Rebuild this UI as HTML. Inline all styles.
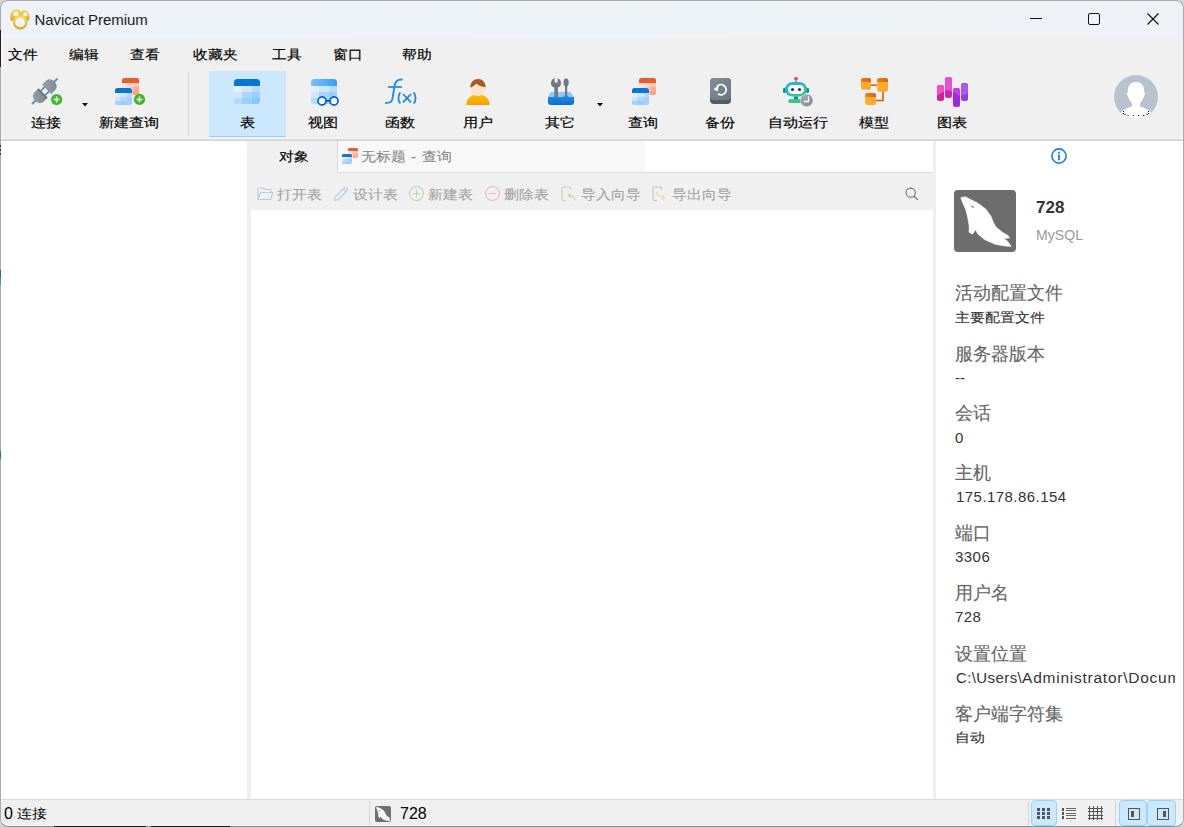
<!DOCTYPE html>
<html><head><meta charset="utf-8">
<style>
*{margin:0;padding:0;box-sizing:border-box}
html,body{width:1184px;height:827px;overflow:hidden;background:#d4d4d4;font-family:"Liberation Sans",sans-serif;color:#000}
.a{position:absolute}
svg{position:absolute;overflow:visible}
#win{position:absolute;left:0;top:0;width:1184px;height:827px;border-radius:8px;overflow:hidden;background:#f0f0f0}
#frame{position:absolute;left:0;top:0;width:1184px;height:827px;border:1px solid #aaa;border-bottom-color:#8f8f8f;border-radius:8px;pointer-events:none}
.t{position:absolute;white-space:nowrap;line-height:1}
.menu,.tb{-webkit-text-stroke:.2px #000}
.lbl{-webkit-text-stroke:.15px #666}
.sy,.otb{-webkit-text-stroke-width:.15px}
.menu{font-size:15px;top:47px;transform:scaleY(.88);transform-origin:50% 50%}
.tb{font-size:15px;top:115px;transform:scaleY(.86);transform-origin:50% 50%}
.gray{color:#9a9a9a}
.lbl{position:absolute;left:955px;font-size:18px;color:#666;white-space:nowrap;line-height:1}
.val{position:absolute;left:955px;font-size:15px;color:#333;white-space:nowrap;line-height:1}
.otb{font-size:15px;top:187px;color:#a4a4a4;transform:scaleY(.88);transform-origin:50% 50%}
.sy{transform:scaleY(.87);transform-origin:50% 50%}
</style></head><body>
<div id="win">
  <!-- title bar -->
  <div class="a" style="left:0;top:0;width:1184px;height:38px;background:linear-gradient(90deg,#eef2fa 0%,#eef2f9 25%,#eef3f7 50%,#eef2f5 80%,#eef2f6 100%)"></div>
  <svg style="left:0;top:0" width="40" height="38" viewBox="0 0 40 38">
    <defs><linearGradient id="gold" x1="0" y1="0" x2="0" y2="1"><stop offset="0" stop-color="#f6dc5c"/><stop offset="1" stop-color="#e3a51a"/></linearGradient></defs>
    <path d="M10.3 20.5 C10 15 11.5 10.5 15.5 9.3 C18.5 8.5 21 10 21.3 12.5 C22 10 24 9.8 25.5 10.3 C28.5 11.3 29.8 15.5 29.4 20.2 L27 21 C25 17 23 16 20.2 16 C17 16 14.5 17.5 13.2 21Z" fill="url(#gold)"/>
    <ellipse cx="15.9" cy="14.1" rx="2.7" ry="2.5" fill="#eef2fa"/>
    <ellipse cx="25.3" cy="14.4" rx="2.1" ry="2.2" fill="#eef2fa"/>
    <circle cx="20.2" cy="22.4" r="6.1" fill="#eef2fa" stroke="url(#gold)" stroke-width="2.3"/>
  </svg>
  <div class="t" style="left:34.5px;top:12px;font-size:15px;color:#1a1a1a;letter-spacing:-.07px">Navicat Premium</div>
  <!-- window controls -->
  <div class="a" style="left:1030px;top:18px;width:12px;height:1px;background:#111"></div>
  <div class="a" style="left:1088px;top:13px;width:12px;height:12px;border:1.3px solid #111;border-radius:2px"></div>
  <svg style="left:1147px;top:13px" width="12" height="12" viewBox="0 0 12 12"><path d="M0.5 0.5L11.5 11.5M11.5 0.5L0.5 11.5" stroke="#111" stroke-width="1.2"/></svg>

  <!-- menu -->
  <div class="t menu" style="left:8px">文件</div>
  <div class="t menu" style="left:69px">编辑</div>
  <div class="t menu" style="left:130px">查看</div>
  <div class="t menu" style="left:193px">收藏夹</div>
  <div class="t menu" style="left:272px">工具</div>
  <div class="t menu" style="left:333px">窗口</div>
  <div class="t menu" style="left:402px">帮助</div>

  <!-- toolbar -->
  <div class="a" style="left:188px;top:72px;width:1px;height:64px;background:#d4d4d4"></div>
  <div class="a" style="left:209px;top:71px;width:77px;height:66px;background:#cce8ff;border-bottom:1px solid #99d1ff"></div>

  <!-- plug icon -->
  <svg style="left:31px;top:78px" width="32" height="28" viewBox="0 0 32 28">
    <defs><linearGradient id="plg" x1="0" y1="0" x2="1" y2="1"><stop offset="0" stop-color="#9ba4ac"/><stop offset="1" stop-color="#7c868f"/></linearGradient></defs>
    <g transform="translate(13.8 13.2) rotate(-45)">
      <rect x="-18" y="-1" width="6" height="2" fill="#5a8fba"/>
      <path d="M-3 -6.5 V6.5 H-8 C-11.5 6.5 -13.5 4 -13.5 0 C-13.5 -4 -11.5 -6.5 -8 -6.5Z" fill="url(#plg)"/>
      <rect x="-4.2" y="-6.5" width="1.8" height="13" fill="#6a737b"/>
      <rect x="-2.5" y="-4" width="5.5" height="1.8" fill="#5a8fba"/>
      <rect x="-2.5" y="2.2" width="5.5" height="1.8" fill="#5a8fba"/>
      <path d="M2.5 -6.5 V6.5 H8 C11.5 6.5 13.5 4 13.5 0 C13.5 -4 11.5 -6.5 8 -6.5Z" fill="url(#plg)"/>
      <rect x="12.5" y="-1" width="5.5" height="2" fill="#5a8fba"/>
    </g>
    <circle cx="25.6" cy="21.5" r="5.6" fill="#41b82a"/>
    <path d="M25.6 18.6V24.4M22.7 21.5H28.5" stroke="#fff" stroke-width="1.5"/>
  </svg>
  <svg style="left:82px;top:103px" width="6" height="4" viewBox="0 0 6 4"><path d="M0 0H6L3 3.5Z" fill="#111"/></svg>

  <!-- new query icon -->
  <svg style="left:115px;top:78px" width="31" height="28" viewBox="0 0 31 28">
    <g transform="translate(7 0)">
      <rect x="0" y="0" width="17" height="17" rx="2.5" fill="#ffbfa5"/>
      <rect x="0" y="5" width="5" height="4" fill="#ffe6dc"/><rect x="5" y="5" width="7" height="4" fill="#ffd3c2"/><rect x="12" y="5" width="5" height="4" fill="#ffc4ad"/>
      <rect x="0" y="9" width="5" height="4" fill="#ffd3c2"/><rect x="5" y="9" width="7" height="4" fill="#ffbfa5"/><rect x="12" y="9" width="5" height="4" fill="#ffaf90"/>
      <path d="M0 13H17V14.5A2.5 2.5 0 0 1 14.5 17H2.5A2.5 2.5 0 0 1 0 14.5Z" fill="#ffa27f"/>
      <path d="M0 5V2.5A2.5 2.5 0 0 1 2.5 0H14.5A2.5 2.5 0 0 1 17 2.5V5Z" fill="#e85a30"/>
    </g>
    <g transform="translate(0 10)">
      <rect x="-0.5" y="-0.5" width="18" height="18" rx="3" fill="#f0f0f0"/>
      <rect x="0" y="0" width="17" height="17" rx="2.5" fill="#a6d4ff"/>
      <rect x="0" y="5" width="5" height="4" fill="#e0f0ff"/><rect x="5" y="5" width="7" height="4" fill="#cde6ff"/><rect x="12" y="5" width="5" height="4" fill="#b3dbff"/>
      <rect x="0" y="9" width="5" height="4" fill="#cde6ff"/><rect x="5" y="9" width="7" height="4" fill="#b0d8ff"/><rect x="12" y="9" width="5" height="4" fill="#a0d0ff"/>
      <path d="M0 13H17V14.5A2.5 2.5 0 0 1 14.5 17H2.5A2.5 2.5 0 0 1 0 14.5Z" fill="#a3d2ff"/>
      <rect x="5" y="13" width="7" height="4" fill="#98cdff"/>
      <path d="M0 5V2.5A2.5 2.5 0 0 1 2.5 0H14.5A2.5 2.5 0 0 1 17 2.5V5Z" fill="#0a74d4"/>
    </g>
    <circle cx="24.5" cy="21.4" r="5.6" fill="#41b82a"/>
    <path d="M24.5 18.5V24.3M21.6 21.4H27.4" stroke="#fff" stroke-width="1.5"/>
  </svg>

  <!-- table icon -->
  <svg style="left:234px;top:79px" width="26" height="25" viewBox="0 0 26 25">
    <rect x="0" y="0" width="26" height="25" rx="3.5" fill="#a0d0ff"/>
    <rect x="0" y="7" width="8" height="6" fill="#e3f1ff"/><rect x="8" y="7" width="10" height="6" fill="#cfe7ff"/><rect x="18" y="7" width="8" height="6" fill="#b5dcff"/>
    <rect x="0" y="13" width="8" height="6" fill="#cfe7ff"/><rect x="8" y="13" width="10" height="6" fill="#a9d6ff"/><rect x="18" y="13" width="8" height="6" fill="#9ccfff"/>
    <path d="M0 19H8V25H3.5A3.5 3.5 0 0 1 0 21.5Z" fill="#b3dbff"/><rect x="8" y="19" width="10" height="6" fill="#9dcfff"/><path d="M18 19H26V21.5A3.5 3.5 0 0 1 22.5 25H18Z" fill="#8cc6ff"/>
    <path d="M0 7V3.5A3.5 3.5 0 0 1 3.5 0H22.5A3.5 3.5 0 0 1 26 3.5V7Z" fill="#0a74d4"/>
  </svg>

  <!-- view icon -->
  <svg style="left:311px;top:79px" width="30" height="27" viewBox="0 0 30 27">
    <defs><linearGradient id="vh" x1="0" y1="0" x2="1" y2="0"><stop offset="0" stop-color="#7cc0fb"/><stop offset="1" stop-color="#3a9cf5"/></linearGradient></defs>
    <rect x="0" y="0" width="26" height="25" rx="3.5" fill="#a0d0ff"/>
    <rect x="0" y="7" width="8" height="6" fill="#e3f1ff"/><rect x="8" y="7" width="10" height="6" fill="#cfe7ff"/><rect x="18" y="7" width="8" height="6" fill="#b5dcff"/>
    <rect x="0" y="13" width="8" height="6" fill="#cfe7ff"/><rect x="8" y="13" width="10" height="6" fill="#a9d6ff"/><rect x="18" y="13" width="8" height="6" fill="#9ccfff"/>
    <path d="M0 19H8V25H3.5A3.5 3.5 0 0 1 0 21.5Z" fill="#b3dbff"/><rect x="8" y="19" width="10" height="6" fill="#9dcfff"/><path d="M18 19H26V21.5A3.5 3.5 0 0 1 22.5 25H18Z" fill="#8cc6ff"/>
    <path d="M0 7V3.5A3.5 3.5 0 0 1 3.5 0H22.5A3.5 3.5 0 0 1 26 3.5V7Z" fill="url(#vh)"/>
    <circle cx="11" cy="22" r="4" fill="#fff" stroke="#0a6fd0" stroke-width="1.8"/>
    <circle cx="23" cy="22" r="4" fill="#fff" stroke="#0a6fd0" stroke-width="1.8"/>
    <rect x="15" y="21" width="4" height="1.6" fill="#08509a"/>
  </svg>

  <!-- function icon -->
  <svg style="left:384px;top:78px" width="34" height="27" viewBox="0 0 34 27">
    <path d="M18.6 1.6 C14.5 1.2 11.5 2.5 10.6 7.5 L8.6 20 C8 24 6.5 25 1.1 25" fill="none" stroke="#1e8ef8" stroke-width="1.9"/>
    <path d="M3.9 9H17.9" stroke="#1e8ef8" stroke-width="1.8"/>
    <path d="M16.4 14.3 C13.8 17 13.8 22.8 16.4 25.5 M29.6 14.3 C32.2 17 32.2 22.8 29.6 25.5" fill="none" stroke="#1a86ee" stroke-width="1.8"/>
    <path d="M19 16L27 24.3M27 16L19 24.3" stroke="#1a86ee" stroke-width="1.8"/>
  </svg>

  <!-- user icon -->
  <svg style="left:466px;top:78px" width="24" height="28" viewBox="0 0 24 28">
    <defs><linearGradient id="ub" x1="0" y1="0" x2="0" y2="1"><stop offset="0" stop-color="#f7c200"/><stop offset="1" stop-color="#f6a000"/></linearGradient></defs>
    <path d="M0.5 25.5 C0.5 21 5 17.5 8.5 16.8 L15.5 16.8 C19 17.5 23.5 21 23.5 25.5 V27 H0.5Z" fill="url(#ub)"/>
    <path d="M4.3 10 C4.3 5 7.8 1 12 1 C16.2 1 19.7 5 19.7 10 C19.7 14.5 16 18 12 18 C8 18 4.3 14.5 4.3 10Z" fill="#ffe2cf"/>
    <path d="M4.3 9.5 C4.3 4 8 1 12 1 C16.3 1 19.7 4.3 19.7 9.3 C16 9 12.5 7.5 10.3 5.5 C8.5 7.5 6.5 9 4.3 9.5Z" fill="#a85a22"/>
  </svg>

  <!-- tools icon -->
  <svg style="left:547px;top:78px" width="28" height="28" viewBox="0 0 28 28">
    <defs><linearGradient id="tbx" x1="0" y1="0" x2="0" y2="1"><stop offset="0" stop-color="#1a8ae8"/><stop offset="1" stop-color="#0a6fcc"/></linearGradient></defs>
    <path d="M3.5 14 H23.5 L27 19 V24 A3 3 0 0 1 24 27 H4 A3 3 0 0 1 1 24 V19Z" fill="#8cc9fa"/>
    <path d="M1 19H27V24A3 3 0 0 1 24 27H4A3 3 0 0 1 1 24Z" fill="url(#tbx)"/>
    <circle cx="9" cy="5" r="5.1" fill="#6f7a85"/>
    <rect x="7.6" y="-1" width="3" height="5.5" rx="0.5" fill="#f0f0f0"/>
    <rect x="7.3" y="8" width="3.7" height="11" fill="#6f7a85"/>
    <ellipse cx="19.1" cy="4.6" rx="2.6" ry="4" fill="#6f7a85"/>
    <rect x="18" y="7" width="2.2" height="11" fill="#6f7a85"/>
    <path d="M16 19 L18 17.2 H20.2 L21.9 19Z" fill="#6f7a85"/>
  </svg>
  <svg style="left:597px;top:103px" width="6" height="4" viewBox="0 0 6 4"><path d="M0 0H6L3 3.5Z" fill="#111"/></svg>

  <!-- query icon -->
  <svg style="left:632px;top:78px" width="25" height="28" viewBox="0 0 25 28">
    <g transform="translate(7 0)">
      <rect x="0" y="0" width="17" height="17" rx="2.5" fill="#ffbfa5"/>
      <rect x="0" y="5" width="5" height="4" fill="#ffe6dc"/><rect x="5" y="5" width="7" height="4" fill="#ffd3c2"/><rect x="12" y="5" width="5" height="4" fill="#ffc4ad"/>
      <rect x="0" y="9" width="5" height="4" fill="#ffd3c2"/><rect x="5" y="9" width="7" height="4" fill="#ffbfa5"/><rect x="12" y="9" width="5" height="4" fill="#ffaf90"/>
      <path d="M0 13H17V14.5A2.5 2.5 0 0 1 14.5 17H2.5A2.5 2.5 0 0 1 0 14.5Z" fill="#ffa27f"/>
      <path d="M0 5V2.5A2.5 2.5 0 0 1 2.5 0H14.5A2.5 2.5 0 0 1 17 2.5V5Z" fill="#e85a30"/>
    </g>
    <g transform="translate(0 10)">
      <rect x="-0.5" y="-0.5" width="18" height="18" rx="3" fill="#f0f0f0"/>
      <rect x="0" y="0" width="17" height="17" rx="2.5" fill="#a6d4ff"/>
      <rect x="0" y="5" width="5" height="4" fill="#e0f0ff"/><rect x="5" y="5" width="7" height="4" fill="#cde6ff"/><rect x="12" y="5" width="5" height="4" fill="#b3dbff"/>
      <rect x="0" y="9" width="5" height="4" fill="#cde6ff"/><rect x="5" y="9" width="7" height="4" fill="#b0d8ff"/><rect x="12" y="9" width="5" height="4" fill="#a0d0ff"/>
      <path d="M0 13H17V14.5A2.5 2.5 0 0 1 14.5 17H2.5A2.5 2.5 0 0 1 0 14.5Z" fill="#a3d2ff"/>
      <rect x="5" y="13" width="7" height="4" fill="#98cdff"/>
      <path d="M0 5V2.5A2.5 2.5 0 0 1 2.5 0H14.5A2.5 2.5 0 0 1 17 2.5V5Z" fill="#0a74d4"/>
    </g>
  </svg>

  <!-- backup icon -->
  <svg style="left:710px;top:78px" width="21" height="26" viewBox="0 0 21 26">
    <defs><linearGradient id="bk" x1="0" y1="0" x2="1" y2="1"><stop offset="0" stop-color="#858f98"/><stop offset="1" stop-color="#6b7580"/></linearGradient></defs>
    <rect x="0" y="0" width="21" height="26" rx="4" fill="#545b63"/>
    <rect x="0" y="0" width="21" height="22" rx="4" fill="url(#bk)"/>
    <path d="M7 8.6 A5.1 5.1 0 1 1 8.1 15.9" fill="none" stroke="#fff" stroke-width="1.9"/>
    <path d="M3.4 11.3 L8.6 7.6 L7.6 13.4Z" fill="#fff"/>
  </svg>

  <!-- robot icon -->
  <svg style="left:782px;top:76px" width="32" height="31" viewBox="0 0 32 31">
    <defs><linearGradient id="rb" x1="0" y1="0" x2="1" y2="1"><stop offset="0" stop-color="#2ab0e6"/><stop offset="1" stop-color="#34c98a"/></linearGradient>
    <linearGradient id="rc" x1="0" y1="0" x2="1" y2="1"><stop offset="0" stop-color="#a9b3bd"/><stop offset="1" stop-color="#7d8893"/></linearGradient></defs>
    <rect x="13.3" y="3.5" width="1.4" height="3.5" fill="#888"/>
    <ellipse cx="14" cy="2.5" rx="2" ry="1.6" fill="#e83a4a"/>
    <rect x="1" y="11.8" width="3" height="5.2" rx="1.5" fill="#0e8a8e"/>
    <rect x="24" y="11.8" width="3" height="5.2" rx="1.5" fill="#0e8a8e"/>
    <rect x="3" y="6" width="22" height="14.6" rx="7.3" fill="url(#rb)"/>
    <rect x="6" y="9" width="16" height="9" rx="4.5" fill="#fff"/>
    <circle cx="10.5" cy="13.5" r="1.6" fill="#12367a"/>
    <circle cx="17.5" cy="13.5" r="1.6" fill="#12367a"/>
    <rect x="12" y="20.5" width="4" height="2.5" fill="#0e8a8e"/>
    <path d="M8 23 H22 V27 H7.5 A2 2 0 0 1 6 25 Z" fill="#34c98a"/>
    <circle cx="24.6" cy="24.4" r="6.4" fill="#f0f0f0"/>
    <circle cx="24.6" cy="24.4" r="6.2" fill="url(#rc)"/>
    <path d="M26.5 20.5V25.5H22" fill="none" stroke="#fff" stroke-width="1.3"/>
  </svg>

  <!-- model icon -->
  <svg style="left:861px;top:78px" width="28" height="28" viewBox="0 0 28 28">
    <defs><linearGradient id="mh" x1="0" y1="0" x2="1" y2="0"><stop offset="0" stop-color="#f57b1e"/><stop offset="1" stop-color="#cf6422"/></linearGradient>
    <linearGradient id="mb" x1="0" y1="0" x2="1" y2="1"><stop offset="0" stop-color="#ffb21a"/><stop offset="1" stop-color="#ffa333"/></linearGradient></defs>
    <path d="M10 7.2H16.5 M22 13V22.5H14.5" fill="none" stroke="#cc5f10" stroke-width="1.6"/>
    <rect x="0" y="0" width="10" height="11.8" rx="2.2" fill="url(#mb)"/><path d="M0 4V2.2A2.2 2.2 0 0 1 2.2 0H7.8A2.2 2.2 0 0 1 10 2.2V4Z" fill="url(#mh)"/>
    <rect x="16.2" y="0" width="10.8" height="13.8" rx="2.2" fill="url(#mb)"/><path d="M16.2 4V2.2A2.2 2.2 0 0 1 18.4 0H24.8A2.2 2.2 0 0 1 27 2.2V4Z" fill="url(#mh)"/>
    <rect x="4.2" y="15" width="10.8" height="12" rx="2.2" fill="url(#mb)"/><path d="M4.2 19V17.2A2.2 2.2 0 0 1 6.4 15H12.8A2.2 2.2 0 0 1 15 17.2V19Z" fill="url(#mh)"/>
  </svg>

  <!-- chart icon -->
  <svg style="left:937px;top:76px" width="32" height="32" viewBox="0 0 32 32">
    <rect x="0" y="9" width="7" height="16" rx="2.5" fill="#d3208f"/>
    <path d="M0 11.5A2.5 2.5 0 0 1 2.5 9H4.5A2.5 2.5 0 0 1 7 11.5V16 C5 16.5 2 18 0 20Z" fill="#f24cbf"/>
    <rect x="8" y="1" width="7" height="21" rx="2.5" fill="#c827b8"/>
    <path d="M8 3.5A2.5 2.5 0 0 1 10.5 1H12.5A2.5 2.5 0 0 1 15 3.5V16 C13 14 10 14 8 15Z" fill="#e552d6"/>
    <rect x="16" y="12" width="7" height="19" rx="2.5" fill="#a126dc"/>
    <path d="M16 14.5A2.5 2.5 0 0 1 18.5 12H20.5A2.5 2.5 0 0 1 23 14.5V20 C21 19 18 17 16 16.5Z" fill="#c23ff0"/>
    <rect x="24" y="7" width="7" height="18" rx="2.5" fill="#8e3edc"/>
    <path d="M24 9.5A2.5 2.5 0 0 1 26.5 7H28.5A2.5 2.5 0 0 1 31 9.5V16 C29.5 19 26.5 19.5 24 19Z" fill="#a65af6"/>
  </svg>

  <!-- avatar -->
  <svg style="left:1114px;top:75px" width="44" height="44" viewBox="0 0 44 44">
    <defs><clipPath id="avc"><circle cx="22" cy="22" r="22"/></clipPath></defs>
    <circle cx="22" cy="22" r="22" fill="#b9c3d0"/>
    <g clip-path="url(#avc)" fill="#fff">
      <path d="M22 7 C16 7 13.6 11 14 16.5 C12.9 17.2 12.7 19.8 13.8 21 C14.8 24 16.5 27 18 28.5 V31.5 C13 33 7 35.5 5 40 V44 H39 V40 C37 35.5 31 33 26 31.5 V28.5 C27.5 27 29.2 24 30.2 21 C31.3 19.8 31.1 17.2 30 16.5 C30.4 11 28 7 22 7Z"/>
    </g>
    <g fill="#000"><rect x="9" y="36" width="1" height="1"/><rect x="9" y="38" width="1" height="1"/><rect x="13.5" y="40" width="1" height="1"/><rect x="29" y="40" width="1" height="1"/><rect x="34" y="38" width="1" height="1"/><rect x="34" y="36" width="1" height="1"/></g>
    <g fill="#1010ff"><rect x="10.5" y="39" width="1.2" height="1"/><rect x="19" y="40" width="1" height="1"/><rect x="24" y="40" width="1" height="1"/><rect x="32.5" y="39" width="1.2" height="1"/></g>
    <g fill="#20e0e0"><rect x="12.5" y="40" width="1" height="1"/><rect x="30" y="40" width="1" height="1"/></g>
  </svg>

  <!-- toolbar labels -->
  <div class="t tb" style="left:31px">连接</div>
  <div class="t tb" style="left:99px">新建查询</div>
  <div class="t tb" style="left:240px">表</div>
  <div class="t tb" style="left:308px">视图</div>
  <div class="t tb" style="left:385px">函数</div>
  <div class="t tb" style="left:463px">用户</div>
  <div class="t tb" style="left:545px">其它</div>
  <div class="t tb" style="left:628px">查询</div>
  <div class="t tb" style="left:705px">备份</div>
  <div class="t tb" style="left:768px">自动运行</div>
  <div class="t tb" style="left:859px">模型</div>
  <div class="t tb" style="left:937px">图表</div>

  <div class="a" style="left:0;top:138px;width:1184px;height:1px;background:#f3f3f3"></div>
  <div class="a" style="left:0;top:139px;width:1184px;height:1px;background:#dcdcdc"></div>
  <div class="a" style="left:0;top:140px;width:1184px;height:1px;background:#d5d5d5"></div>

  <!-- left panel -->
  <div class="a" style="left:0;top:141px;width:247px;height:658px;background:#fff"></div>

  <!-- middle tabs -->
  <div class="a" style="left:645px;top:141px;width:288px;height:31px;background:#fff"></div>
  <div class="a" style="left:337px;top:141px;width:308px;height:31px;background:#f8f8f8;border-left:1px solid #dcdcdc"></div>
  <div class="a" style="left:337px;top:172px;width:596px;height:1px;background:#dcdcdc"></div>
  <div class="t sy" style="left:279px;top:149px;font-size:15px">对象</div>
  <svg style="left:342px;top:148px" width="16" height="16" viewBox="0 0 16 16"><g transform="translate(6 0)"><rect x="0" y="0" width="10" height="10" rx="1.6" fill="#ffbfa5"/><rect x="0" y="3" width="3" height="2.4" fill="#ffe6dc"/><rect x="3" y="3" width="4" height="2.4" fill="#ffd3c2"/><rect x="7" y="3" width="3" height="2.4" fill="#ffc4ad"/><rect x="0" y="5.4" width="3" height="2.3" fill="#ffd3c2"/><rect x="3" y="5.4" width="4" height="2.3" fill="#ffbfa5"/><rect x="7" y="5.4" width="3" height="2.3" fill="#ffaf90"/><path d="M0 7.7H10V8.4A1.6 1.6 0 0 1 8.4 10H1.6A1.6 1.6 0 0 1 0 8.4Z" fill="#ffb094"/><rect x="3" y="7.7" width="4" height="2.3" fill="#ffa27f"/><path d="M0 3V1.6A1.6 1.6 0 0 1 1.6 0H8.4A1.6 1.6 0 0 1 10 1.6V3Z" fill="#e85a30"/></g><g transform="translate(0 6)"><rect x="-0.6" y="-0.6" width="11.2" height="11.2" rx="2" fill="#f8f8f8"/><rect x="0" y="0" width="10" height="10" rx="1.6" fill="#a6d4ff"/><rect x="0" y="3" width="3" height="2.4" fill="#e0f0ff"/><rect x="3" y="3" width="4" height="2.4" fill="#cde6ff"/><rect x="7" y="3" width="3" height="2.4" fill="#b3dbff"/><rect x="0" y="5.4" width="3" height="2.3" fill="#cde6ff"/><rect x="3" y="5.4" width="4" height="2.3" fill="#b0d8ff"/><rect x="7" y="5.4" width="3" height="2.3" fill="#a0d0ff"/><path d="M0 7.7H10V8.4A1.6 1.6 0 0 1 8.4 10H1.6A1.6 1.6 0 0 1 0 8.4Z" fill="#a8d4ff"/><rect x="3" y="7.7" width="4" height="2.3" fill="#98cdff"/><path d="M0 3V1.6A1.6 1.6 0 0 1 1.6 0H8.4A1.6 1.6 0 0 1 10 1.6V3Z" fill="#0a74d4"/></g></svg>
  <div class="t sy" style="left:361px;top:149px;font-size:15px;color:#8a8a8a">无标题<span style="letter-spacing:.8px"> - </span>查询</div>

  <!-- object toolbar -->
  <svg style="left:257px;top:187px" width="17" height="14" viewBox="0 0 17 14">
    <path d="M1 12.5V2A1 1 0 0 1 2 1H6L7.5 2.5H13A1 1 0 0 1 14 3.5V5 M1 12.5L3.5 5.5H16L13.5 12.5Z" fill="none" stroke="#b9cde0" stroke-width="1.1" stroke-linejoin="round"/>
  </svg>
  <div class="t otb" style="left:277px">打开表</div>
  <svg style="left:333px;top:186px" width="16" height="16" viewBox="0 0 16 16">
    <path d="M1.5 14.5L2.2 11L11.5 1.7A1.2 1.2 0 0 1 13.3 1.7L14.3 2.7A1.2 1.2 0 0 1 14.3 4.5L5 13.8Z M10.3 3L13 5.7" fill="none" stroke="#b4cce2" stroke-width="1.1" stroke-linejoin="round"/>
  </svg>
  <div class="t otb" style="left:353px">设计表</div>
  <svg style="left:409px;top:186px" width="16" height="16" viewBox="0 0 16 16">
    <circle cx="7.5" cy="7.5" r="7" fill="none" stroke="#b5dcaa" stroke-width="1.1"/>
    <path d="M7.5 3.8V11.2M3.8 7.5H11.2" stroke="#b5dcaa" stroke-width="1.1"/>
  </svg>
  <div class="t otb" style="left:428px">新建表</div>
  <svg style="left:485px;top:186px" width="16" height="16" viewBox="0 0 16 16">
    <circle cx="7.5" cy="7.5" r="7" fill="none" stroke="#ebbcbc" stroke-width="1.1"/>
    <path d="M3.8 7.5H11.2" stroke="#ebbcbc" stroke-width="1.1"/>
  </svg>
  <div class="t otb" style="left:504px">删除表</div>
  <svg style="left:561px;top:186px" width="16" height="16" viewBox="0 0 16 16">
    <path d="M5 14.5H2.5A1.5 1.5 0 0 1 1 13V2.5A1.5 1.5 0 0 1 2.5 1H8A1.5 1.5 0 0 1 9.5 2.5V4" fill="none" stroke="#c8c8c8" stroke-width="1.1"/>
    <path d="M14.5 14.5C13.5 11 11 9.5 7.5 9.5 M9.5 7.3L7.2 9.5L9.5 11.7" fill="none" stroke="#b9dcaa" stroke-width="1.1"/>
  </svg>
  <div class="t otb" style="left:581px">导入向导</div>
  <svg style="left:652px;top:186px" width="16" height="16" viewBox="0 0 16 16">
    <path d="M5 14.5H2.5A1.5 1.5 0 0 1 1 13V2.5A1.5 1.5 0 0 1 2.5 1H8A1.5 1.5 0 0 1 9.5 2.5V4" fill="none" stroke="#c8c8c8" stroke-width="1.1"/>
    <path d="M4.5 6C5 9.5 7.5 11.5 12.5 11.5 M10.3 9.3L12.6 11.5L10.3 13.7" fill="none" stroke="#ecd2a8" stroke-width="1.1"/>
  </svg>
  <div class="t otb" style="left:672px">导出向导</div>
  <svg style="left:905px;top:187px" width="14" height="14" viewBox="0 0 14 14">
    <circle cx="5.7" cy="5.7" r="4.6" fill="none" stroke="#707070" stroke-width="1.1"/>
    <path d="M9 9L12.8 12.8" stroke="#707070" stroke-width="1.2"/>
  </svg>

  <div class="a" style="left:251px;top:210px;width:682px;height:589px;background:#fff"></div>

  <!-- right panel -->
  <div class="a" style="left:936px;top:141px;width:248px;height:658px;background:#fff"></div>
  <svg style="left:1051px;top:148px" width="16" height="16" viewBox="0 0 16 16">
    <circle cx="8" cy="8" r="7.1" fill="none" stroke="#1a7cff" stroke-width="1.6"/>
    <rect x="7.1" y="3.8" width="1.8" height="1.8" fill="#1a7cff"/>
    <rect x="7.1" y="6.6" width="1.8" height="5.6" fill="#1a7cff"/>
  </svg>
  <svg style="left:954px;top:190px" width="62" height="62" viewBox="0 0 62 62">
    <rect x="0" y="0" width="62" height="62" rx="4" fill="#6d6d6d"/>
    <path d="M6.8 7.7 L11.3 6.7 L15.1 8.8 L24.0 13.2 L31.6 18.9 L36.9 26.1 L39.4 32.5 L42.0 37.1 L48.0 42.0 L54.4 45.8 L55.4 48.0 L49.6 48.6 L53.4 51.1 L57.2 56.5 L50.6 55.9 L41.7 54.4 L30.5 49.6 L23.7 43.9 L21.7 39.7 L18.4 44.2 L15.1 42.2 L15.1 35.6 L13.8 28.0 L11.7 19.4 L8.7 12.8Z" fill="#fff" stroke="#fff" stroke-width="0.6" stroke-linejoin="round"/>
    <path d="M16.5 16 C18.5 15.3 20 16 20.3 18.5 C19.5 17.5 18 16.8 16.5 16Z" fill="#6d6d6d"/>
  </svg>
  <div class="t" style="left:1036px;top:199px;font-size:17px;font-weight:bold;color:#333">728</div>
  <div class="t" style="left:1036px;top:228px;font-size:14px;color:#9a9a9a;letter-spacing:.1px">MySQL</div>

  <div class="lbl" style="top:284px">活动配置文件</div>
  <div class="val sy" style="top:310px">主要配置文件</div>
  <div class="lbl" style="top:345px">服务器版本</div>
  <div class="val" style="top:370px">--</div>
  <div class="lbl" style="top:404px">会话</div>
  <div class="val" style="top:430px">0</div>
  <div class="lbl" style="top:464px">主机</div>
  <div class="val" style="top:489px;left:956px;letter-spacing:.45px">175.178.86.154</div>
  <div class="lbl" style="top:524px">端口</div>
  <div class="val" style="top:549px;letter-spacing:.45px">3306</div>
  <div class="lbl" style="top:584px">用户名</div>
  <div class="val" style="top:609px;letter-spacing:.45px">728</div>
  <div class="lbl" style="top:645px">设置位置</div>
  <div class="a" style="left:955px;top:660px;width:220px;height:30px;overflow:hidden"><div class="val" style="left:1px;top:10px"><span style="letter-spacing:.4px">C:\Users\</span><span style="font-size:15.5px;letter-spacing:.75px">Administrator\Documents\Navicat</span></div></div>
  <div class="lbl" style="top:705px">客户端字符集</div>
  <div class="val sy" style="top:730px">自动</div>

  <!-- status bar -->
  <div class="a" style="left:0;top:799px;width:1184px;height:1px;background:#d9d9d9"></div>
  <div class="t" style="left:4px;top:806px;font-size:16px">0 <span style="font-size:15px;display:inline-block;transform:scaleY(.87)">连接</span></div>
  <div class="a" style="left:369px;top:801px;width:1px;height:24px;background:#d4d4d4"></div>
  <svg style="left:375px;top:806px" width="16" height="16" viewBox="0 0 16 16">
    <rect x="0" y="0" width="16" height="16" rx="2" fill="#707070"/>
    <path transform="translate(-0.3 -0.5) scale(0.27)" d="M6.8 7.7 L11.3 6.7 L15.1 8.8 L24.0 13.2 L31.6 18.9 L36.9 26.1 L39.4 32.5 L42.0 37.1 L48.0 42.0 L54.4 45.8 L55.4 48.0 L49.6 48.6 L53.4 51.1 L57.2 56.5 L50.6 55.9 L41.7 54.4 L30.5 49.6 L23.7 43.9 L21.7 39.7 L18.4 44.2 L15.1 42.2 L15.1 35.6 L13.8 28.0 L11.7 19.4 L8.7 12.8Z" fill="#fff" stroke="#fff" stroke-width="2.5" stroke-linejoin="round"/>
    <circle cx="4.6" cy="4.6" r="0.7" fill="#707070"/>
  </svg>
  <div class="t" style="left:400px;top:806px;font-size:16px">728</div>

  <div class="a" style="left:1028px;top:801px;width:1px;height:24px;background:#d4d4d4"></div>
  <div class="a" style="left:1031px;top:800px;width:26px;height:26px;background:#cce8ff;border:1px solid #99d1ff;border-radius:4px"></div>
  <div class="a" style="left:1037px;top:808px;width:3px;height:3px;background:#555"></div><div class="a" style="left:1037px;top:812px;width:3px;height:3px;background:#555"></div><div class="a" style="left:1037px;top:816px;width:3px;height:3px;background:#555"></div><div class="a" style="left:1042px;top:808px;width:3px;height:3px;background:#555"></div><div class="a" style="left:1042px;top:812px;width:3px;height:3px;background:#555"></div><div class="a" style="left:1042px;top:816px;width:3px;height:3px;background:#555"></div><div class="a" style="left:1047px;top:808px;width:3px;height:3px;background:#555"></div><div class="a" style="left:1047px;top:812px;width:3px;height:3px;background:#555"></div><div class="a" style="left:1047px;top:816px;width:3px;height:3px;background:#555"></div>
  <div class="a" style="left:1062px;top:808px;width:2px;height:3px;background:#555"></div><div class="a" style="left:1062px;top:812px;width:2px;height:3px;background:#555"></div><div class="a" style="left:1062px;top:816px;width:2px;height:3px;background:#555"></div><div class="a" style="left:1066px;top:808px;width:10px;height:1px;background:#666"></div><div class="a" style="left:1066px;top:810px;width:10px;height:1px;background:#666"></div><div class="a" style="left:1066px;top:813px;width:10px;height:1px;background:#666"></div><div class="a" style="left:1066px;top:815px;width:10px;height:1px;background:#666"></div><div class="a" style="left:1066px;top:818px;width:10px;height:1px;background:#666"></div>
  <div class="a" style="left:1089px;top:806px;width:1px;height:14px;background:#555"></div><div class="a" style="left:1093px;top:806px;width:1px;height:14px;background:#555"></div><div class="a" style="left:1097px;top:806px;width:1px;height:14px;background:#555"></div><div class="a" style="left:1101px;top:806px;width:1px;height:14px;background:#555"></div><div class="a" style="left:1088px;top:808px;width:15px;height:1px;background:#555"></div><div class="a" style="left:1088px;top:811px;width:15px;height:1px;background:#555"></div><div class="a" style="left:1088px;top:815px;width:15px;height:1px;background:#555"></div><div class="a" style="left:1088px;top:818px;width:15px;height:1px;background:#555"></div>
  <div class="a" style="left:1115px;top:801px;width:1px;height:24px;background:#d4d4d4"></div>
  <div class="a" style="left:1119px;top:800px;width:28px;height:26px;background:#cce8ff;border:1px solid #99d1ff;border-radius:4px"></div>
  <div class="a" style="left:1147px;top:800px;width:29px;height:26px;background:#cce8ff;border:1px solid #99d1ff;border-radius:4px"></div>
  <div class="a" style="left:1128px;top:808px;width:12px;height:12px;border:1px solid #555"></div><div class="a" style="left:1131px;top:811px;width:3px;height:6px;background:#555"></div>
  <div class="a" style="left:1157px;top:808px;width:12px;height:12px;border:1px solid #555"></div><div class="a" style="left:1163px;top:811px;width:3px;height:6px;background:#555"></div>
</div>
<div id="frame"></div>
<div class="a" style="left:54px;top:826px;width:92px;height:1px;background:#1a1a1a"></div>
<div class="a" style="left:151px;top:826px;width:79px;height:1px;background:#1a1a1a"></div>
<div class="a" style="left:0;top:30px;width:1px;height:37px;background:#222"></div>
<div class="a" style="left:0;top:145px;width:1px;height:2px;background:#333"></div><div class="a" style="left:0;top:149px;width:1px;height:2px;background:#333"></div><div class="a" style="left:0;top:153px;width:1px;height:2px;background:#333"></div>
<div class="a" style="left:0;top:270px;width:1px;height:7px;background:#2f6aa8"></div><div class="a" style="left:0;top:277px;width:1px;height:8px;background:#3a9cc4"></div>
<div class="a" style="left:0;top:451px;width:1px;height:8px;background:#2f6aa8"></div>
</body></html>
